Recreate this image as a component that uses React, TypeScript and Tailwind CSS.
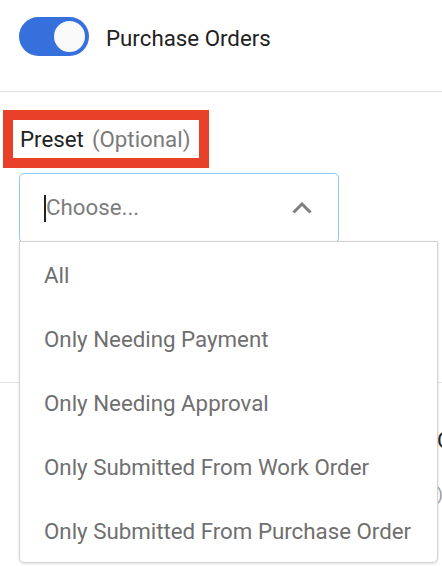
const presets = [
  'All',
  'Only Needing Payment',
  'Only Needing Approval',
  'Only Submitted From Work Order',
  'Only Submitted From Purchase Order',
];

const Toggle = () => (
  <div className="flex h-[39px] w-[70px] items-center justify-end rounded-full bg-[#3670dc] p-[2px]">
    <div className="h-[35px] w-[35px] rounded-full border-2 border-[#3670dc] bg-[#f9f9f9]" />
  </div>
);

export default function App() {
  return (
    <div className="relative h-[566px] w-[442px] overflow-hidden bg-white font-['Roboto',sans-serif]">
      <div className="flex h-[92px] items-start gap-[17px] border-b border-[#e4e4e4] pl-[19px] pt-[17px]">
        <Toggle />
        <span className="pt-[2px] text-[22.3px] leading-[39px] text-[#222]">Purchase Orders</span>
      </div>

      <div className="ml-[3px] mt-[18px] flex h-[58px] w-[206px] items-center border-[10px] border-[#e9402a] pl-[7px] pt-[2px]">
        <span className="text-[22.3px] text-[#222]">Preset</span>
        <span className="ml-[8px] text-[22.3px] text-[#7a7a7a]">(Optional)</span>
      </div>

      <div className="ml-[19px] mt-[5px] flex h-[70px] w-[320px] items-center rounded-[5px] border border-[#8ec9f7] pl-[24px] pr-[26px]">
        <span className="h-[27px] w-[2px] bg-[#222]" />
        <span className="flex-1 text-[22.3px] text-[#7d7d7d]">Choose...</span>
        <svg width="20" height="12" viewBox="0 0 20 12" fill="none">
          <path d="M1.5 10.5 L10 2 L18.5 10.5" stroke="#808080" strokeWidth="3" />
        </svg>
      </div>

      {/* content underneath the open menu */}
      <div className="mt-[139px] border-t border-[#e4e4e4]">
        <div className="whitespace-nowrap pl-[437px] pt-[45px] text-[22px] leading-[26px] text-[#222]">Orders</div>
        <div className="whitespace-nowrap pl-[437px] pt-[30px] text-[17px] leading-[20px] text-[#999]">)</div>
      </div>

      <ul className="absolute left-[19px] top-[241px] h-[322px] w-[419px] rounded-b-[5px] border border-[#d2d2d2] bg-white pt-[2px] shadow-[0_1px_3px_rgba(0,0,0,0.12)]">
        {presets.map((p) => (
          <li key={p} className="flex h-[64px] items-center pl-[24px] text-[22.3px] text-[#6f6f6f]">
            {p}
          </li>
        ))}
      </ul>
    </div>
  );
}
